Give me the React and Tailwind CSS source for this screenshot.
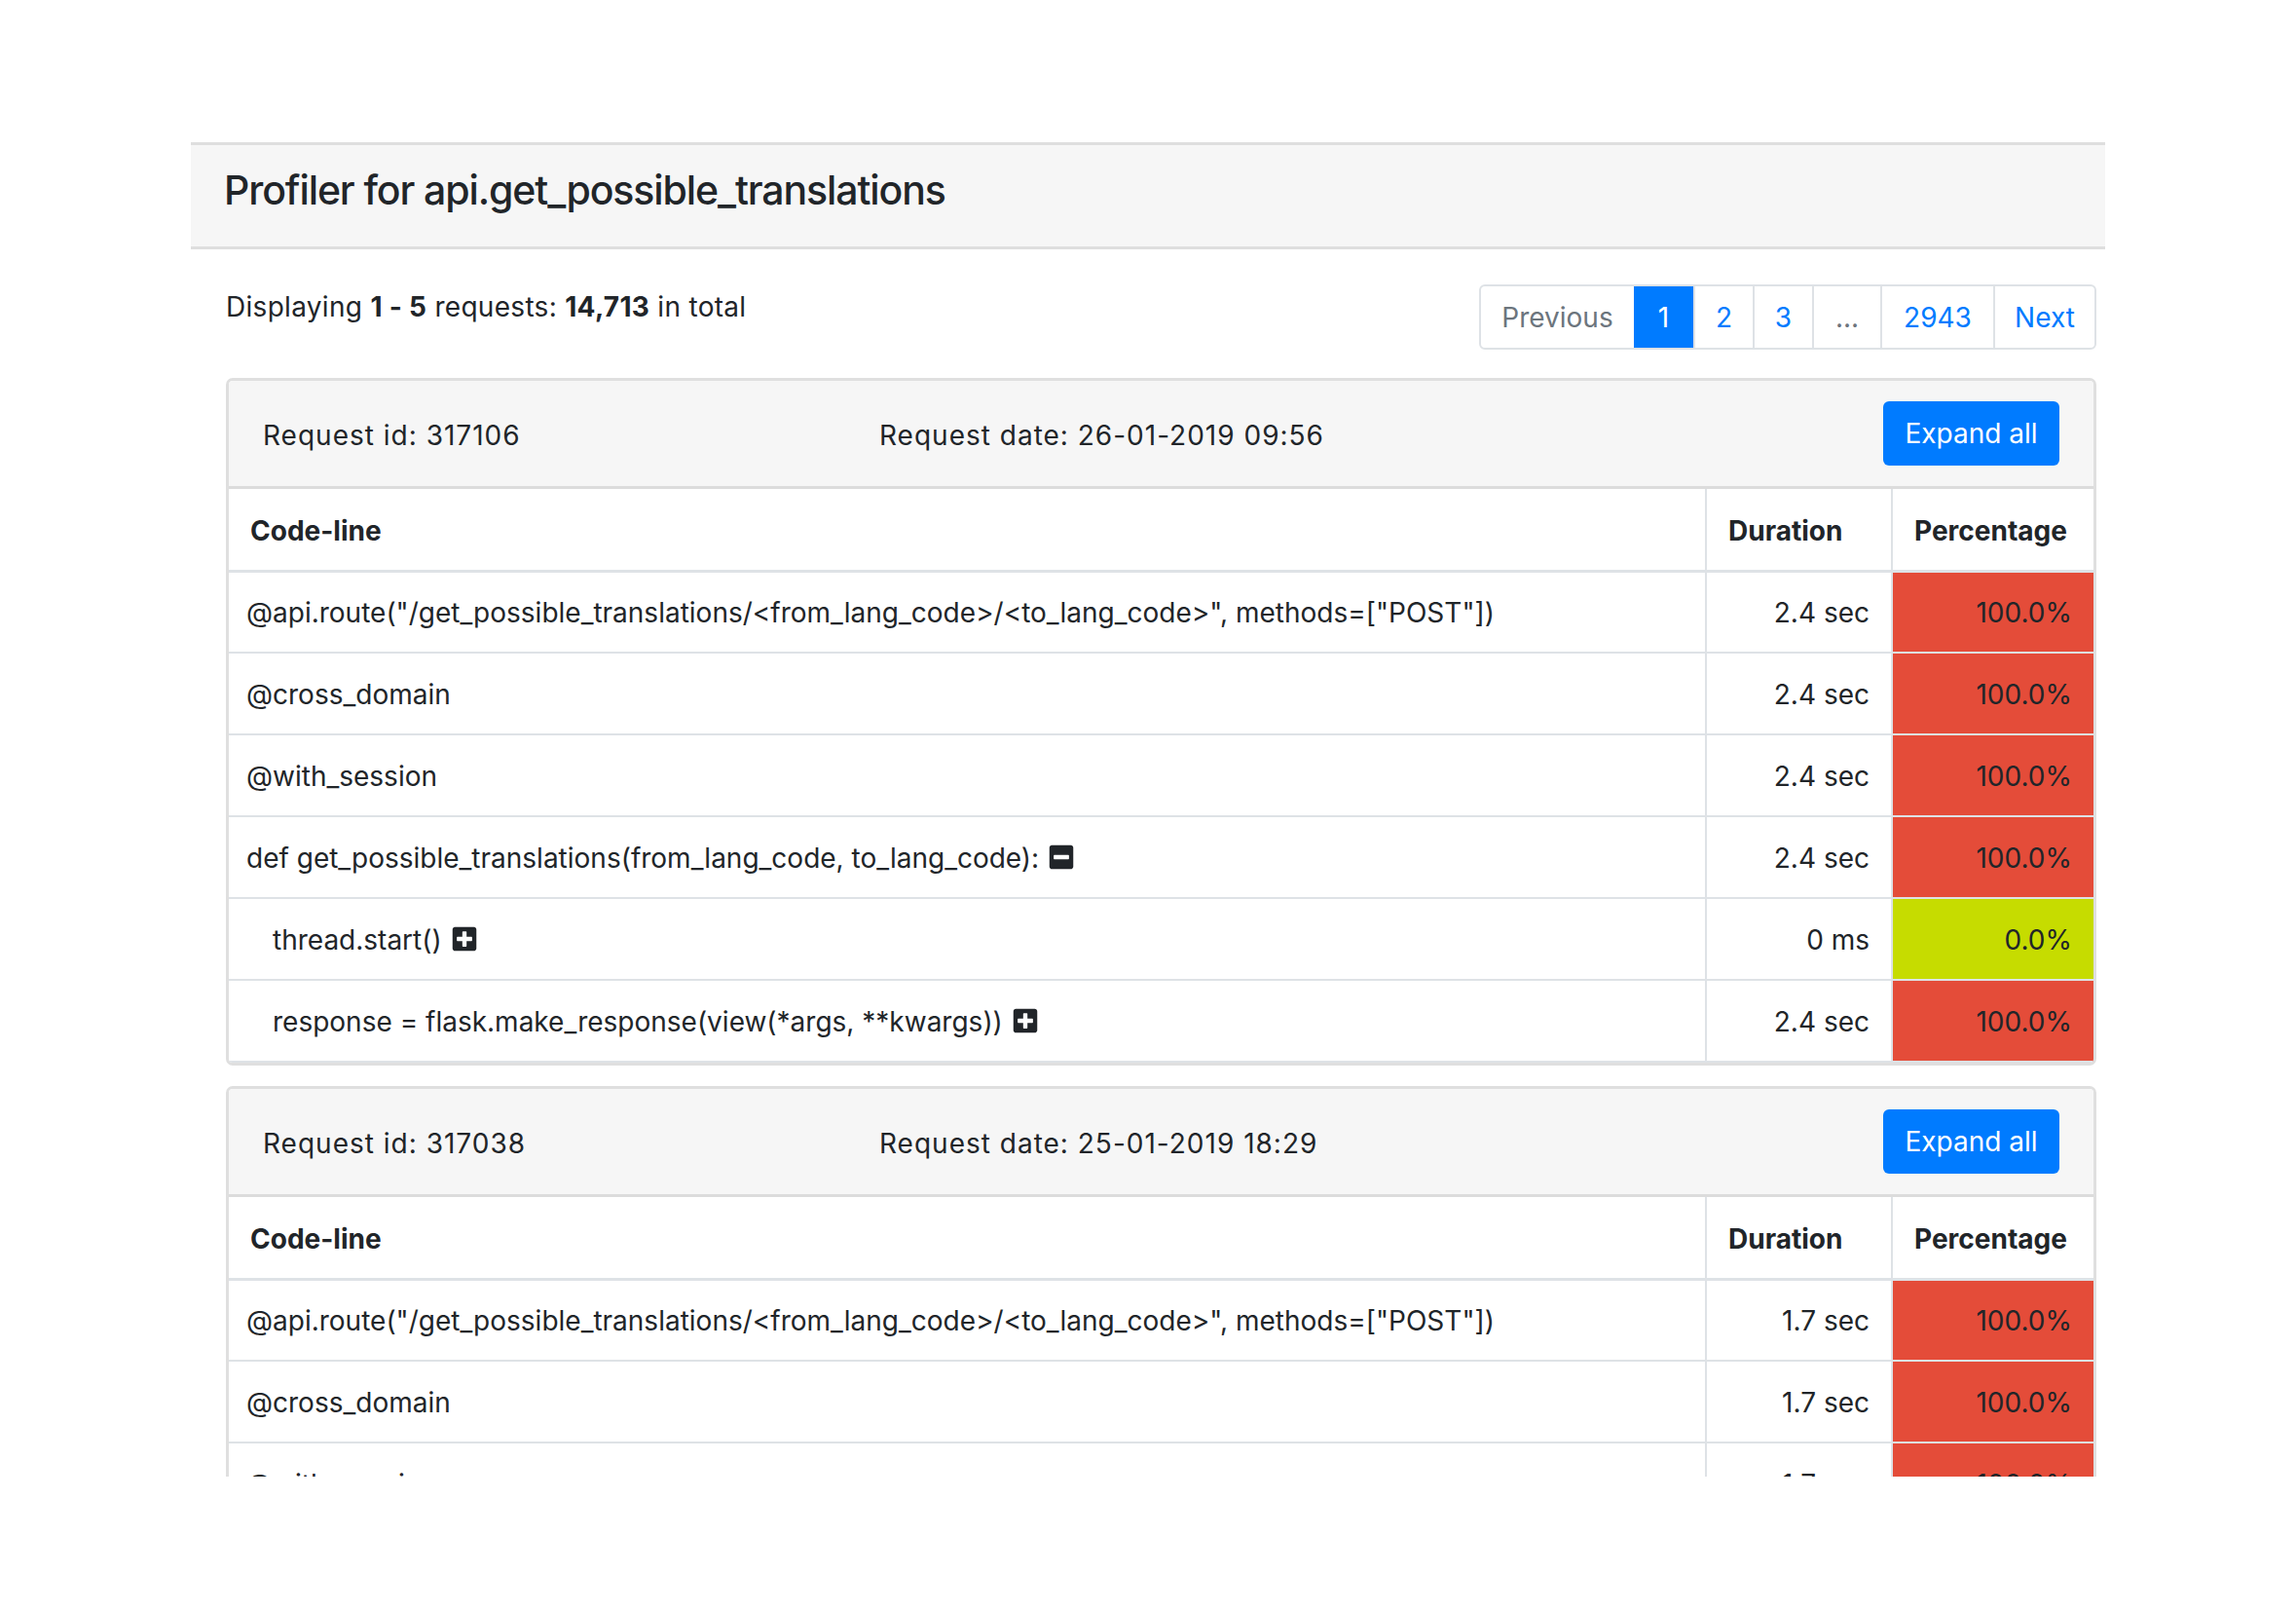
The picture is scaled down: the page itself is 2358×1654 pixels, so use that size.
import React from "react";
import { FaMinusSquare, FaPlusSquare } from "react-icons/fa";

const RED = "bg-[#e44c39]";
const GREEN = "bg-[#c6dc00]";

const card1 = {
  id: "317106",
  date: "26-01-2019 09:56",
  rows: [
    { code: '@api.route("/get_possible_translations/<from_lang_code>/<to_lang_code>", methods=["POST"])', dur: "2.4 sec", pct: "100.0%", bg: RED, indent: false },
    { code: "@cross_domain", dur: "2.4 sec", pct: "100.0%", bg: RED, indent: false },
    { code: "@with_session", dur: "2.4 sec", pct: "100.0%", bg: RED, indent: false },
    { code: "def get_possible_translations(from_lang_code, to_lang_code):", dur: "2.4 sec", pct: "100.0%", bg: RED, indent: false, icon: "minus" },
    { code: "thread.start()", dur: "0 ms", pct: "0.0%", bg: GREEN, indent: true, icon: "plus" },
    { code: "response = flask.make_response(view(*args, **kwargs))", dur: "2.4 sec", pct: "100.0%", bg: RED, indent: true, icon: "plus" },
  ],
};

const card2 = {
  id: "317038",
  date: "25-01-2019 18:29",
  rows: [
    { code: '@api.route("/get_possible_translations/<from_lang_code>/<to_lang_code>", methods=["POST"])', dur: "1.7 sec", pct: "100.0%", bg: RED, indent: false },
    { code: "@cross_domain", dur: "1.7 sec", pct: "100.0%", bg: RED, indent: false },
    { code: "@with_session", dur: "1.7 sec", pct: "100.0%", bg: RED, indent: false },
    { code: "def get_possible_translations(from_lang_code, to_lang_code):", dur: "1.7 sec", pct: "100.0%", bg: RED, indent: false, icon: "minus" },
  ],
};

function RequestCard({ data }) {
  return (
    <div className="mb-[21px] rounded-[7px] border-[3px] border-[#dfdfdf] overflow-hidden bg-white">
      <div className="grid grid-cols-[633px_1fr_auto] items-center bg-[#f6f6f6] border-b-[3px] border-[#dcdcdc] px-[35px] py-[21px]">
        <div className="tracking-[1px] pt-[3px]">Request id: {data.id}</div>
        <div className="tracking-[1px] pt-[3px]">Request date: {data.date}</div>
        <div className="flex justify-end">
          <button className="h-[66px] w-[181px] rounded-[6px] bg-[#007bff] text-white">Expand all</button>
        </div>
      </div>
      <table className="w-full border-collapse table-fixed">
        <colgroup>
          <col />
          <col className="w-[191px]" />
          <col className="w-[207px]" />
        </colgroup>
        <thead>
          <tr className="h-[84px] border-b-[3px] border-[#dee2e6]">
            <th className="text-left font-bold px-[22px] pt-[3px]">Code-line</th>
            <th className="text-left font-bold px-[22px] pt-[3px] border-l-2 border-[#dee2e6]">Duration</th>
            <th className="text-left font-bold px-[22px] pt-[3px] border-l-2 border-[#dee2e6]">Percentage</th>
          </tr>
        </thead>
        <tbody>
          {data.rows.map((r, i) => (
            <tr key={i} className="h-[84px] border-b-2 border-[#dee2e6]">
              <td className={r.indent ? "pl-[45px] pr-[20px] pt-[2px] font-normal" : "pl-[18px] pr-[20px] pt-[2px] font-normal"}>
                <span className="tracking-[0px]">{r.code}</span>
                {r.icon === "minus" && <FaMinusSquare className="inline-block ml-[9px] align-[-3px] text-[#212529]" size={28} />}
                {r.icon === "plus" && <FaPlusSquare className="inline-block ml-[9px] align-[-3px] text-[#212529]" size={28} />}
              </td>
              <td className="text-right px-[22px] pt-[2px] border-l-2 border-[#dee2e6]">{r.dur}</td>
              <td className={`text-right px-[22px] pt-[2px] border-l-2 border-[#dee2e6] ${r.bg}`}>{r.pct}</td>
            </tr>
          ))}
        </tbody>
      </table>
    </div>
  );
}

export default function App() {
  return (
    <div className="w-[2358px] h-[1654px] bg-white overflow-hidden text-[#212529] text-[28px] leading-[42px] font-['Inter',sans-serif]">
      <div className="h-[146px]" />
      <div className="ml-[196px] w-[1966px] h-[1370px] overflow-hidden">
        <div className="h-[110px] flex items-center bg-[#f6f6f6] border-y-[3px] border-[#dedede] pl-[34px] pb-[12px]">
          <h4 className="text-[41px] leading-[50px] font-medium tracking-[-1.1px]">Profiler for api.get_possible_translations</h4>
        </div>
        <div className="pl-[36px] pr-[9px] pt-[36px]">
          <div className="flex justify-between items-start">
            <div className="pt-[2px] tracking-[0.3px]">
              Displaying <b>1 - 5</b> requests: <b>14,713</b> in total
            </div>
            <div className="flex h-[67px] rounded-[6px] border-2 border-[#dee2e6] overflow-hidden">
              <span className="flex items-center justify-center w-[157px] text-[#6c757d]">Previous</span>
              <span className="flex items-center justify-center w-[61px] bg-[#007bff] text-white">1</span>
              <span className="flex items-center justify-center w-[61px] text-[#007bff] border-l-2 border-[#dee2e6]">2</span>
              <span className="flex items-center justify-center w-[61px] text-[#007bff] border-l-2 border-[#dee2e6]">3</span>
              <span className="flex items-center justify-center w-[70px] text-[#6c757d] border-l-2 border-[#dee2e6]">...</span>
              <span className="flex items-center justify-center w-[116px] text-[#007bff] border-l-2 border-[#dee2e6]">2943</span>
              <span className="flex items-center justify-center w-[104px] text-[#007bff] border-l-2 border-[#dee2e6]">Next</span>
            </div>
          </div>
          <div className="mt-[29px]">
            <RequestCard data={card1} />
            <RequestCard data={card2} />
          </div>
        </div>
      </div>
    </div>
  );
}
